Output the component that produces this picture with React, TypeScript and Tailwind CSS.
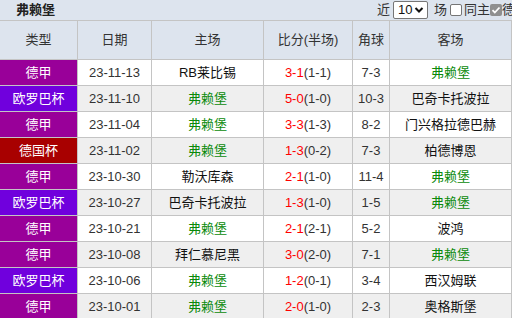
import React from 'react';

type Row = {
  league: string;
  date: string;
  home: string;
  score: string;
  half: string;
  corner: string;
  away: string;
};

const TEAM = '弗赖堡';

const rows: Row[] = [
  { league: '德甲', date: '23-11-13', home: 'RB莱比锡', score: '3-1', half: '(1-1)', corner: '7-3', away: '弗赖堡' },
  { league: '欧罗巴杯', date: '23-11-10', home: '弗赖堡', score: '5-0', half: '(1-0)', corner: '10-3', away: '巴奇卡托波拉' },
  { league: '德甲', date: '23-11-04', home: '弗赖堡', score: '3-3', half: '(1-3)', corner: '8-2', away: '门兴格拉德巴赫' },
  { league: '德国杯', date: '23-11-02', home: '弗赖堡', score: '1-3', half: '(0-2)', corner: '7-3', away: '柏德博恩' },
  { league: '德甲', date: '23-10-30', home: '勒沃库森', score: '2-1', half: '(1-0)', corner: '11-4', away: '弗赖堡' },
  { league: '欧罗巴杯', date: '23-10-27', home: '巴奇卡托波拉', score: '1-3', half: '(1-0)', corner: '1-5', away: '弗赖堡' },
  { league: '德甲', date: '23-10-21', home: '弗赖堡', score: '2-1', half: '(2-1)', corner: '5-2', away: '波鸿' },
  { league: '德甲', date: '23-10-08', home: '拜仁慕尼黑', score: '3-0', half: '(2-0)', corner: '7-1', away: '弗赖堡' },
  { league: '欧罗巴杯', date: '23-10-06', home: '弗赖堡', score: '1-2', half: '(0-1)', corner: '3-4', away: '西汉姆联' },
  { league: '德甲', date: '23-10-01', home: '弗赖堡', score: '2-0', half: '(1-0)', corner: '2-3', away: '奥格斯堡' },
];

const leagueBg: Record<string, string> = {
  '德甲': 'bg-[#990099]',
  '欧罗巴杯': 'bg-[#7000dd]',
  '德国杯': 'bg-[#a80000]',
};

const cell = 'flex items-center justify-center border-r border-b border-[#c4c4c4] whitespace-nowrap';

function Team({ name }: { name: string }) {
  return <span className={name === TEAM ? 'text-[#0a8a0a]' : 'text-[#111]'}>{name}</span>;
}

export default function App() {
  return (
    <div
      className="w-[512px] h-[318px] overflow-hidden bg-white text-[13px] text-[#333]"
      style={{ fontFamily: '"Liberation Sans", "Noto Sans CJK SC", sans-serif' }}
    >
      {/* title bar */}
      <div className="h-[21px] flex items-center bg-[#dde4ee] border-b border-[#c4c4c4] whitespace-nowrap">
        <span className="pl-[16px] w-[377px] font-bold text-[13px] text-[#222]">弗赖堡</span>
        <div className="flex items-center text-[13px] text-[#333] w-[135px] overflow-hidden">
          <span className="mr-[3px]">近</span>
          <span className="flex items-center h-[18px] w-[35px] shrink-0 border border-[#767676] bg-white rounded-[2px] pl-[4px] pr-[3px] justify-between text-[13px] text-[#111]">
            10
            <svg width="10" height="8" viewBox="0 0 10 8">
              <path d="M1.5 2l3.5 3.5L8.5 2" stroke="#111" strokeWidth="2" fill="none" />
            </svg>
          </span>
          <span className="ml-[6px] mr-[3px]">场</span>
          <span className="w-[12px] h-[12px] shrink-0 border border-[#767676] rounded-[2px] bg-white" />
          <span className="ml-[2px]">同主</span>
          <span className="w-[12px] h-[12px] shrink-0 rounded-[2px] bg-[#8f8f8f] flex items-center justify-center">
            <svg width="10" height="10" viewBox="0 0 10 10">
              <path d="M1.5 5.2l2.3 2.3L8.5 2.5" stroke="#fff" strokeWidth="1.8" fill="none" />
            </svg>
          </span>
          <span>德甲</span>
        </div>
      </div>

      <div className="grid grid-cols-[78px_74px_112px_89px_37px_122px] grid-rows-[39px] auto-rows-[26px]">
        {['类型', '日期', '主场', '比分(半场)', '角球', '客场'].map((h) => (
          <div key={h} className={`${cell} bg-[#dde4ee] text-[#333]`}>
            {h}
          </div>
        ))}
        {rows.map((r, i) => {
          const bg = i % 2 === 0 ? 'bg-white' : 'bg-[#efefef]';
          return (
            <React.Fragment key={i}>
              <div className={`${cell} ${leagueBg[r.league]} text-white`}>{r.league}</div>
              <div className={`${cell} ${bg}`}>{r.date}</div>
              <div className={`${cell} ${bg}`}>
                <Team name={r.home} />
              </div>
              <div className={`${cell} ${bg}`}>
                <span className="text-[#ff0000]">{r.score}</span>
                <span>{r.half}</span>
              </div>
              <div className={`${cell} ${bg}`}>{r.corner}</div>
              <div className={`${cell} ${bg}`}>
                <Team name={r.away} />
              </div>
            </React.Fragment>
          );
        })}
      </div>
    </div>
  );
}
